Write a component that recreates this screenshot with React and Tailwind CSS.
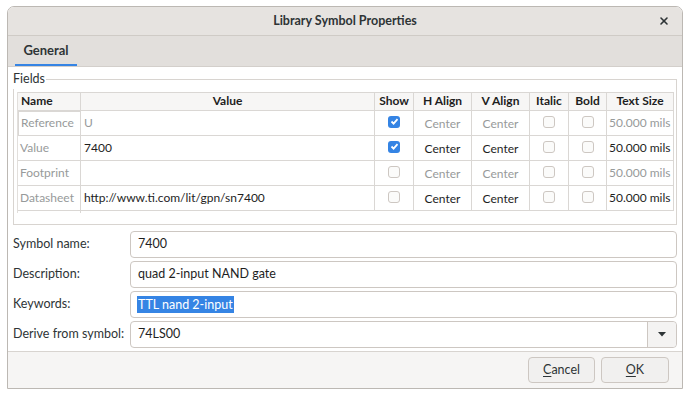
import { X } from "lucide-react";

const cols = "grid-cols-[63px_294px_39px_58px_58px_39px_38px_67px]";

const rows = [
  { name: "Reference", value: "U", show: true, dim: true, focus: true },
  { name: "Value", value: "7400", show: true, dim: false },
  { name: "Footprint", value: "", show: false, dim: true },
  { name: "Datasheet", value: "http://www.ti.com/lit/gpn/sn7400", show: false, dim: false },
];

const Check = ({ checked }) =>
  checked ? (
    <div className="w-[12px] h-[12px] rounded-[3px] bg-[#3584e4] flex items-center justify-center">
      <svg width="9" height="9" viewBox="0 0 9 9">
        <path d="M1.5 4.5 L3.6 6.6 L7.5 2.2" stroke="white" strokeWidth="1.8" fill="none" />
      </svg>
    </div>
  ) : (
    <div className="w-[12px] h-[12px] rounded-[3px] border border-[#cdc7c2] bg-[#fbfbfa]" />
  );

const Cell = ({ children, className = "" }) => (
  <div className={`border-r border-b border-[#dad7d4] h-[25px] flex ${className}`}>{children}</div>
);

const FormRow = ({ label, children }) => (
  <div className="flex items-center h-[27px]">
    <div className="w-[117px] text-[12.5px] text-[#2e3436]">{label}</div>
    {children}
  </div>
);

export default function App() {
  return (
    <div className="w-[690px] h-[396px] bg-white pt-[6px] pl-[7px] font-['Lato',sans-serif] text-[#2e3436]">
      <div className="w-[676px] h-[383px] border border-[#bcb8b3] rounded-t-[7px] flex flex-col overflow-hidden">
        {/* Title bar */}
        <div className="h-[29px] shrink-0 bg-[#e6e3e0] border-b border-[#cfcbc6] flex items-center relative">
          <div className="flex-1 text-center text-[12.5px] font-bold text-[#2e3436]">
            Library Symbol Properties
          </div>
          <X size={12} strokeWidth={3.2} className="absolute right-[12px] top-[8px] text-[#2e3436]" />
        </div>

        {/* Tabs */}
        <div className="h-[31px] shrink-0 bg-[#e2dfdc] border-b border-[#d3cfcb] flex items-end pl-[7px]">
          <div className="w-[62px] h-full flex flex-col">
            <div className="flex-1 flex items-center justify-center text-[13px] font-bold text-[#2e3436] pt-[1px]">
              General
            </div>
            <div className="h-[2px] bg-[#3584e4]" />
          </div>
        </div>

        {/* Content */}
        <div className="flex-1 bg-white px-[5px] pt-[3px]">
          <fieldset className="border border-[#d8d4d0] pl-[3px] pr-[2px] pb-[11px] pt-[3px]">
            <legend className="text-[12.5px] text-[#2e3436] pr-[1px] -ml-[4px]">Fields</legend>
            <div className="border-l border-[#e2dfdc]">
              <div className={`grid ${cols} border-t border-[#dad7d4]`}>
                {["Name", "Value", "Show", "H Align", "V Align", "Italic", "Bold", "Text Size"].map((h, i) => (
                  <div
                    key={h}
                    className={`h-[18px] bg-[#f7f6f5] border-r border-b border-[#dad7d4] flex items-center text-[12px] font-bold text-[#1e1e1e] ${
                      i === 0 ? "pl-[3px]" : "justify-center"
                    }`}
                  >
                    {h}
                  </div>
                ))}
                {rows.map((r) => {
                  const c = r.dim ? "text-[#979a9a]" : "text-[#1e1e1e]";
                  return [
                    <Cell
                      key={r.name + "n"}
                      className={`items-center pl-[2px] text-[12px] text-[#979a9a] ${
                        r.focus ? "border border-[#1e1e1e]" : ""
                      }`}
                    >
                      {r.name}
                    </Cell>,
                    <Cell key={r.name + "v"} className={`items-center pl-[3px] text-[12px] ${c}`}>
                      {r.value}
                    </Cell>,
                    <Cell key={r.name + "s"} className="items-center justify-center pb-[2px]">
                      <Check checked={r.show} />
                    </Cell>,
                    <Cell key={r.name + "h"} className={`justify-center items-end pb-[2px] text-[12px] ${c}`}>
                      Center
                    </Cell>,
                    <Cell key={r.name + "va"} className={`justify-center items-end pb-[2px] text-[12px] ${c}`}>
                      Center
                    </Cell>,
                    <Cell key={r.name + "i"} className="items-center justify-center pb-[2px]">
                      <Check />
                    </Cell>,
                    <Cell key={r.name + "b"} className="items-center justify-center pb-[2px]">
                      <Check />
                    </Cell>,
                    <Cell key={r.name + "t"} className={`items-start pt-[3px] pl-[2px] text-[12px] whitespace-nowrap ${c}`}>
                      50.000 mils
                    </Cell>,
                  ];
                })}
              </div>
              <div className="h-[2px] flex">
                <div className="w-[63px] border-r border-[#dad7d4]" />
              </div>
            </div>
          </fieldset>

          <div className="flex flex-col gap-[3px] mt-[6px]">
            <FormRow label="Symbol name:">
              <div className="flex-1 h-full border border-[#cdc7c2] rounded-[4px] flex items-center pl-[7px] text-[12.5px] text-[#1e1e1e]">
                7400
              </div>
            </FormRow>
            <FormRow label="Description:">
              <div className="flex-1 h-full border border-[#cdc7c2] rounded-[4px] flex items-center pl-[7px] text-[12.5px] text-[#1e1e1e]">
                quad 2-input NAND gate
              </div>
            </FormRow>
            <FormRow label="Keywords:">
              <div className="flex-1 h-full border border-[#cdc7c2] rounded-[4px] flex items-center pl-[6px] text-[12.5px]">
                <span className="bg-[#3584e4] text-white px-[1px] leading-[17px]">TTL nand 2-input</span>
              </div>
            </FormRow>
            <FormRow label="Derive from symbol:">
              <div className="flex-1 h-full border border-[#cdc7c2] rounded-[4px] flex items-stretch text-[12.5px] text-[#1e1e1e]">
                <div className="flex-1 flex items-center pl-[7px]">74LS00</div>
                <div className="w-[29px] border-l border-[#cdc7c2] bg-[#f4f3f2] rounded-r-[4px] flex items-center justify-center">
                  <svg width="8" height="5" viewBox="0 0 8 5">
                    <path d="M0 0 L8 0 L4 4.5 Z" fill="#2e3436" />
                  </svg>
                </div>
              </div>
            </FormRow>
          </div>
        </div>

        {/* Footer */}
        <div className="h-[37px] shrink-0 bg-[#f6f5f4] border-t border-[#d8d4d0] flex items-center justify-end gap-[6px] pr-[13px]">
          <button className="w-[67px] h-[26px] border border-[#cdc7c2] rounded-[4px] bg-[#f1f0ef] text-[12.5px] text-[#2e3436]">
            <span className="underline underline-offset-2">C</span>ancel
          </button>
          <button className="w-[68px] h-[26px] border border-[#cdc7c2] rounded-[4px] bg-[#f1f0ef] text-[12.5px] text-[#2e3436]">
            <span className="underline underline-offset-2">O</span>K
          </button>
        </div>
      </div>
    </div>
  );
}
